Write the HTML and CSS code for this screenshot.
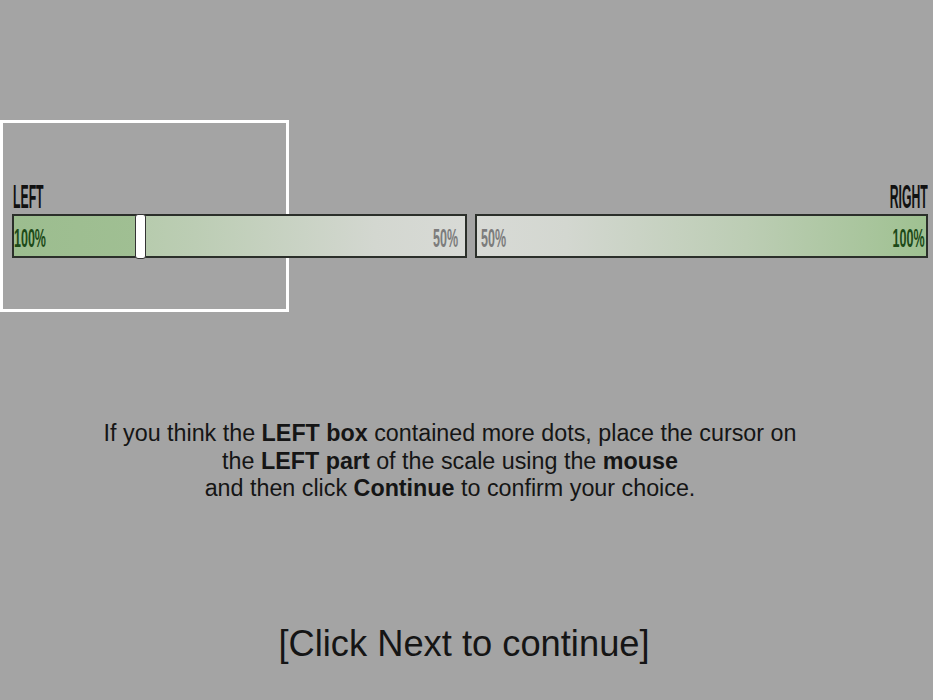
FILE: index.html
```html
<!DOCTYPE html>
<html>
<head>
<meta charset="utf-8">
<link rel="stylesheet" href="styles.css">
</head>
<body>
<div class="frame"></div>
<main class="page">
  <section class="scale">
    <div class="labels">
      <span class="label label-left">LEFT</span>
      <span class="label label-right">RIGHT</span>
    </div>
    <div class="bars">
      <div class="bar bar-left">
        <div class="fill" style="width:128px"></div>
        <span class="pct pct-start strong">100%</span>
        <span class="pct pct-end weak">50%</span>
        <div class="thumb"></div>
      </div>
      <div class="bar bar-right">
        <span class="pct pct-start weak">50%</span>
        <span class="pct pct-end strong">100%</span>
      </div>
    </div>
  </section>
  <p class="instructions">If you think the <b>LEFT box</b> contained more dots, place the cursor on<br>the <b>LEFT part</b> of the scale using the <b>mouse</b><br>and then click <b>Continue</b> to confirm your choice.</p>
  <p class="next">[Click Next to continue]</p>
</main>
</body>
</html>
```
FILE: styles.css
```css
html, body {
  margin: 0;
  padding: 0;
  background: #a4a4a4;
  width: 933px;
  height: 700px;
  overflow: hidden;
  font-family: "Liberation Sans", Arial, sans-serif;
  color: #151515;
}

.frame {
  position: absolute;
  left: 0;
  top: 120px;
  width: 283px;
  height: 186px;
  border: 3px solid #ffffff;
}

.page {
  display: flex;
  flex-direction: column;
}

.scale {
  padding: 179px 5px 0 12px;
}

.labels {
  display: flex;
  justify-content: space-between;
  height: 35px;
}

.label {
  display: inline-block;
  font-size: 34px;
  line-height: 34px;
  font-weight: bold;
  color: #111;
  transform: scaleX(0.36);
}

.label-left {
  transform-origin: left center;
  margin-left: 1px;
}

.label-right {
  transform-origin: right center;
  margin-right: 0;
}

.bars {
  display: flex;
  gap: 8px;
}

.bar {
  position: relative;
  box-sizing: border-box;
  height: 44px;
  border: 2px solid #2b2f2a;
  display: flex;
  justify-content: space-between;
  align-items: center;
}

.bar-left {
  width: 455px;
  background: linear-gradient(to right, #a9c69c 0%, #bccdb4 40%, #d3d7d0 80%, #d8dad6 100%);
}

.bar-right {
  width: 453px;
  background: linear-gradient(to right, #d8dad6 0%, #d3d7d0 20%, #bccdb4 60%, #9fc191 100%);
}

.fill {
  position: absolute;
  left: 0;
  top: 0;
  bottom: 0;
  background: linear-gradient(to right, #9cbd8f, #a0bf93);
}

.pct {
  position: relative;
  font-size: 26px;
  line-height: 40px;
  font-weight: bold;
  padding-top: 3px;
  transform: scaleX(0.48);
}

.pct-start {
  transform-origin: left center;
}

.pct-end {
  transform-origin: right center;
}

.bar-left .pct-end { margin-right: 7px; }
.bar-right .pct-start { margin-left: 4px; }
.bar-right .pct-end { margin-right: 2px; }

.strong { color: #1d4a18; }
.weak { color: #7c7c7c; }

.thumb {
  position: absolute;
  left: 121px;
  top: -2px;
  width: 9px;
  height: 43px;
  background: #ffffff;
  border: 1px solid #333;
  border-radius: 3px;
}

.instructions {
  margin: 162px 33px 0 0;
  font-size: 23.3px;
  line-height: 27.5px;
  text-align: center;
}

.instructions b {
  font-weight: bold;
}

.next {
  margin: 120px 5px 0 0;
  font-size: 36.3px;
  line-height: 41.4px;
  text-align: center;
}
```
